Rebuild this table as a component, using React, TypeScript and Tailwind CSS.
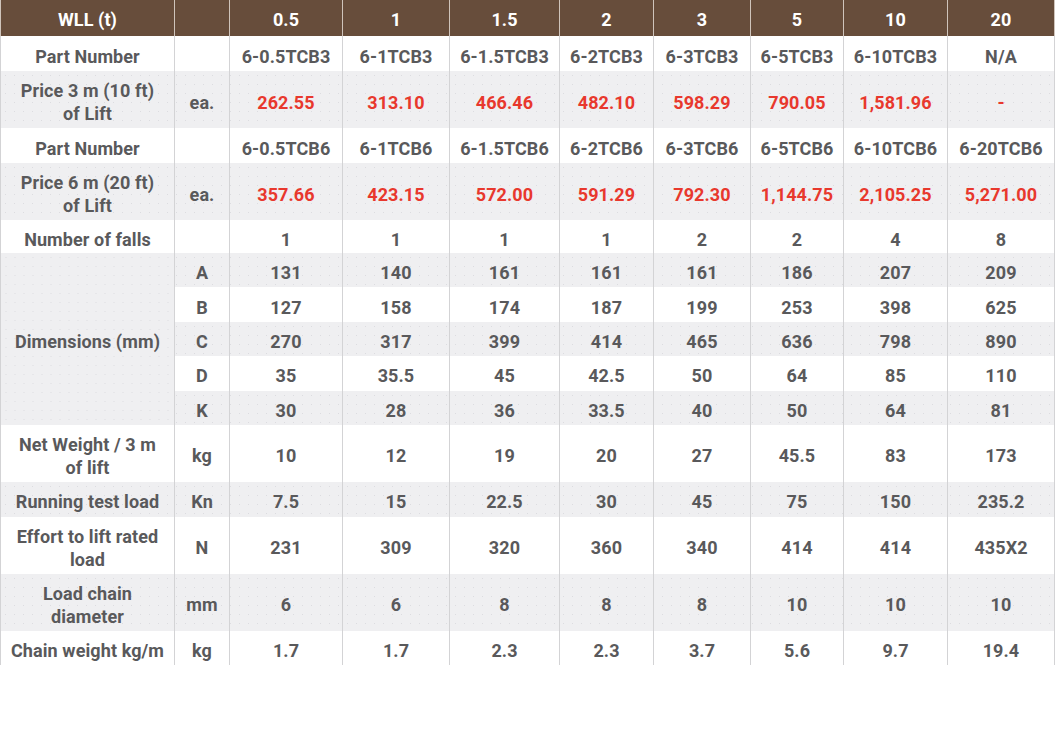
import React from "react";

type Row = {
  label: string[];
  unit?: string;
  values: string[];
  red?: boolean;
  tall?: boolean;
  h?: string;
};

const sizes = ["0.5", "1", "1.5", "2", "3", "5", "10", "20"];
const widths = [174, 55, 113, 107, 110, 94, 97, 93, 104, 107];

const topRows: Row[] = [
  {
    label: ["Part Number"],
    values: ["6-0.5TCB3", "6-1TCB3", "6-1.5TCB3", "6-2TCB3", "6-3TCB3", "6-5TCB3", "6-10TCB3", "N/A"],
  },
  {
    label: ["Price 3 m (10 ft)", "of Lift"],
    unit: "ea.",
    red: true,
    tall: true,
    values: ["262.55", "313.10", "466.46", "482.10", "598.29", "790.05", "1,581.96", "-"],
  },
  {
    label: ["Part Number"],
    values: ["6-0.5TCB6", "6-1TCB6", "6-1.5TCB6", "6-2TCB6", "6-3TCB6", "6-5TCB6", "6-10TCB6", "6-20TCB6"],
  },
  {
    label: ["Price 6 m (20 ft)", "of Lift"],
    unit: "ea.",
    red: true,
    tall: true,
    values: ["357.66", "423.15", "572.00", "591.29", "792.30", "1,144.75", "2,105.25", "5,271.00"],
  },
  {
    label: ["Number of falls"],
    h: "h-[33px]",
    values: ["1", "1", "1", "1", "2", "2", "4", "8"],
  },
];

const dimensions = [
  { key: "A", values: ["131", "140", "161", "161", "161", "186", "207", "209"] },
  { key: "B", values: ["127", "158", "174", "187", "199", "253", "398", "625"] },
  { key: "C", values: ["270", "317", "399", "414", "465", "636", "798", "890"] },
  { key: "D", values: ["35", "35.5", "45", "42.5", "50", "64", "85", "110"] },
  { key: "K", values: ["30", "28", "36", "33.5", "40", "50", "64", "81"] },
];

const bottomRows: Row[] = [
  {
    label: ["Net Weight / 3 m", "of lift"],
    unit: "kg",
    tall: true,
    values: ["10", "12", "19", "20", "27", "45.5", "83", "173"],
  },
  {
    label: ["Running test load"],
    unit: "Kn",
    values: ["7.5", "15", "22.5", "30", "45", "75", "150", "235.2"],
  },
  {
    label: ["Effort to lift rated", "load"],
    unit: "N",
    tall: true,
    values: ["231", "309", "320", "360", "340", "414", "414", "435X2"],
  },
  {
    label: ["Load chain", "diameter"],
    unit: "mm",
    tall: true,
    values: ["6", "6", "8", "8", "8", "10", "10", "10"],
  },
  {
    label: ["Chain weight kg/m"],
    unit: "kg",
    h: "h-[34px]",
    values: ["1.7", "1.7", "2.3", "2.3", "3.7", "5.6", "9.7", "19.4"],
  },
];

const stripe =
  "bg-[#efeff1] bg-[radial-gradient(#dcdce0_0.7px,transparent_0.8px)] bg-[length:9px_9px]";
const cell = "border-x border-[#d3d3d5] text-center align-middle px-1 pt-[5px] pb-0";

const DataRow = ({ row, grey }: { row: Row; grey: boolean }) => (
  <tr className={`${grey ? stripe : "bg-white"} ${row.h ?? (row.tall ? "h-[57px]" : "h-[35px]")}`}>
    <td className={cell}>
      {row.label.map((l, i) => (
        <div key={i}>{l}</div>
      ))}
    </td>
    <td className={cell}>{row.unit ?? ""}</td>
    {row.values.map((v, i) => (
      <td key={i} className={`${cell} ${row.red ? "text-[#e8382d]" : ""}`}>
        {v}
      </td>
    ))}
  </tr>
);

export default function App() {
  return (
    <div className="w-[1063px] h-[740px] bg-white">
      <table
        className="border-collapse table-fixed w-[1055px] text-[18px] leading-[23px] font-bold text-[#59595b] tracking-[0.1px]"
        style={{ fontFamily: "Roboto, 'Liberation Sans', sans-serif" }}
      >
        <colgroup>
          {widths.map((w, i) => (
            <col key={i} style={{ width: w }} />
          ))}
        </colgroup>
        <thead>
          <tr className="bg-[#674d3b] text-white h-[36px]">
            <th className="border-x border-[#cfc4bb] text-center align-middle font-bold pt-[3px]">WLL (t)</th>
            <th className="border-x border-[#cfc4bb]"></th>
            {sizes.map((s) => (
              <th key={s} className="border-x border-[#cfc4bb] text-center align-middle font-bold pt-[3px]">
                {s}
              </th>
            ))}
          </tr>
        </thead>
        <tbody>
          {topRows.map((r, i) => (
            <DataRow key={i} row={r} grey={i % 2 === 1} />
          ))}
          {dimensions.map((d, i) => (
            <tr key={d.key} className={`${i % 2 === 0 ? stripe : "bg-white"} h-[34.4px]`}>
              {i === 0 && (
                <td rowSpan={5} className={`${cell} ${stripe}`}>
                  Dimensions (mm)
                </td>
              )}
              <td className={cell}>{d.key}</td>
              {d.values.map((v, j) => (
                <td key={j} className={cell}>
                  {v}
                </td>
              ))}
            </tr>
          ))}
          {bottomRows.map((r, i) => (
            <DataRow key={i} row={r} grey={i % 2 === 1} />
          ))}
        </tbody>
      </table>
    </div>
  );
}
